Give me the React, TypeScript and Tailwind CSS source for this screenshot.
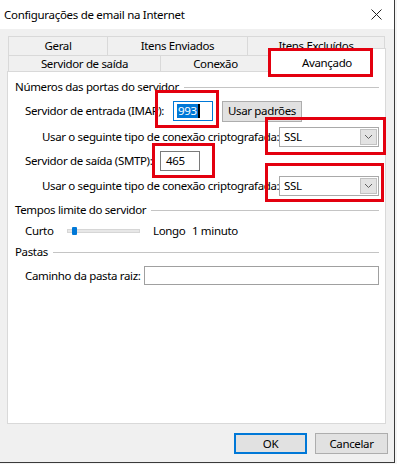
import React from 'react';

function GroupHeader({ title, className }: { title: string; className: string }) {
  return (
    <div className={`flex items-center h-[14px] pl-[7px] pr-[6px] ${className}`}>
      <span className="leading-none whitespace-nowrap">{title}</span>
      <div className="flex-1 h-px bg-[#c4c4c4] ml-[5px]" />
    </div>
  );
}

function Combo({ value }: { value: string }) {
  return (
    <div className="flex items-center w-[100px] h-[20px] bg-white border border-[#a9a9a9]">
      <span className="flex-1 pl-[4px] leading-none">{value}</span>
      <div className="w-[17px] h-[16px] mr-[1px] bg-[#e3e3e3] border border-[#c2c2c2] flex items-center justify-center">
        <svg width="9" height="6" viewBox="0 0 9 6">
          <path d="M1 1 L4.5 4.5 L8 1" fill="none" stroke="#606060" strokeWidth="1" />
        </svg>
      </div>
    </div>
  );
}

function RedBox({ className }: { className: string }) {
  return <div className={`absolute border-[3px] border-[#e3000f] pointer-events-none ${className}`} />;
}

export default function App() {
  return (
    <div className="relative w-[397px] h-[464px] bg-[#f4f4f4] overflow-hidden text-[11.5px] tracking-[-0.35px] text-black font-['Noto_Sans',sans-serif]">
      <div className="w-[395px] h-[463px] bg-[#f0f0f0] border-r border-b border-[#3a3a3a] flex flex-col">
        {/* title bar */}
        <div className="h-[29px] bg-white flex items-center justify-between pl-[4px] pr-[12px]">
          <span className="leading-none text-[11.5px] tracking-[-0.3px]">Configurações de email na Internet</span>
          <svg width="11" height="11" viewBox="0 0 11 11">
            <path d="M0.5 0.5 L10.5 10.5 M10.5 0.5 L0.5 10.5" stroke="#222" strokeWidth="1" />
          </svg>
        </div>

        {/* tabs */}
        <div className="mt-[7px] ml-[8px] flex h-[19px]">
          <div className="w-[99px] border-t border-l border-[#d9d9d9] flex items-center justify-center leading-none">Geral</div>
          <div className="w-[140px] border-t border-l border-[#d9d9d9] flex items-center justify-center leading-none">Itens Enviados</div>
          <div className="w-[138px] border-t border-l border-r border-[#d9d9d9] flex items-center justify-center leading-none">Itens Excluídos</div>
        </div>
        <div className="ml-[8px] flex items-end h-[16px]">
          <div className="w-[152px] h-full border-t border-l border-[#d9d9d9] flex items-center justify-center leading-none">Servidor de saída</div>
          <div className="w-[110px] h-full border-t border-l border-[#d9d9d9] flex items-center justify-center leading-none">Conexão</div>
          <div className="relative -ml-[2px] -mb-px w-[118px] h-[24px] bg-white border-t border-l border-r border-[#d9d9d9] flex items-center justify-center pt-[4px] leading-none">Avançado</div>
        </div>

        {/* panel */}
        <div className="ml-[7px] w-[379px] h-[353px] bg-white border border-[#d9d9d9] flex flex-col">
          <GroupHeader title="Números das portas do servidor" className="mt-[8px]" />

          <div className="flex items-center h-[20px] mt-[7px] pl-[17px]">
            <span className="w-[148px] leading-none whitespace-nowrap">Servidor de entrada (IMAP):</span>
            <div className="w-[40px] h-[20px] border border-[#0078d7] bg-white flex items-center pl-[3px]">
              <span className="bg-[#0078d7] text-white leading-[14px] px-px">993</span>
              <span className="w-[2px] h-[14px] bg-black" />
            </div>
            <div className="ml-[9px] w-[80px] h-[21px] bg-[#e1e1e1] border border-[#adadad] flex items-center justify-center leading-none">Usar padrões</div>
          </div>

          <div className="flex items-center h-[20px] mt-[6px] pl-[34px]">
            <span className="w-[237px] leading-none whitespace-nowrap">Usar o seguinte tipo de conexão criptografada:</span>
            <Combo value="SSL" />
          </div>

          <div className="flex items-center h-[20px] mt-[4px] pl-[17px]">
            <span className="w-[135px] leading-none whitespace-nowrap">Servidor de saída (SMTP):</span>
            <div className="w-[40px] h-[20px] border border-[#7a7a7a] bg-white flex items-center pl-[5px] leading-none">465</div>
          </div>

          <div className="flex items-center h-[20px] mt-[5px] pl-[34px]">
            <span className="w-[237px] leading-none whitespace-nowrap">Usar o seguinte tipo de conexão criptografada:</span>
            <Combo value="SSL" />
          </div>

          <GroupHeader title="Tempos limite do servidor" className="mt-[7px]" />

          <div className="flex items-center h-[18px] mt-[5px] pl-[17px]">
            <span className="w-[42px] leading-none">Curto</span>
            <div className="relative w-[73px] h-[4px] bg-[#e7e7e7] border border-[#d6d6d6]">
              <div className="absolute left-[4px] -top-[3px] w-[5px] h-[8px] rounded-[1px] bg-[#0078d7]" />
            </div>
            <span className="ml-[13px] w-[39px] leading-none">Longo</span>
            <span className="leading-none">1 minuto</span>
          </div>

          <GroupHeader title="Pastas" className="mt-[5px]" />

          <div className="flex items-center h-[19px] mt-[7px] pl-[17px]">
            <span className="w-[119px] leading-none whitespace-nowrap">Caminho da pasta raiz:</span>
            <div className="w-[235px] h-[19px] border border-[#a0a0a0] bg-white" />
          </div>
        </div>

        {/* buttons */}
        <div className="flex justify-end gap-[8px] pr-[6px] mt-[9px]">
          <div className="w-[73px] h-[21px] bg-[#e1e1e1] border-2 border-[#0078d7] flex items-center justify-center leading-none">OK</div>
          <div className="w-[73px] h-[21px] bg-[#e1e1e1] border border-[#adadad] flex items-center justify-center leading-none">Cancelar</div>
        </div>
      </div>

      {/* annotation boxes */}
      <RedBox className="left-[268px] top-[48px] w-[105px] h-[29px]" />
      <RedBox className="left-[155px] top-[90px] w-[64px] h-[38px]" />
      <RedBox className="left-[265px] top-[117px] w-[121px] h-[38px]" />
      <RedBox className="left-[152px] top-[143px] w-[63px] h-[35px]" />
      <RedBox className="left-[265px] top-[163px] w-[119px] h-[39px]" />
    </div>
  );
}
